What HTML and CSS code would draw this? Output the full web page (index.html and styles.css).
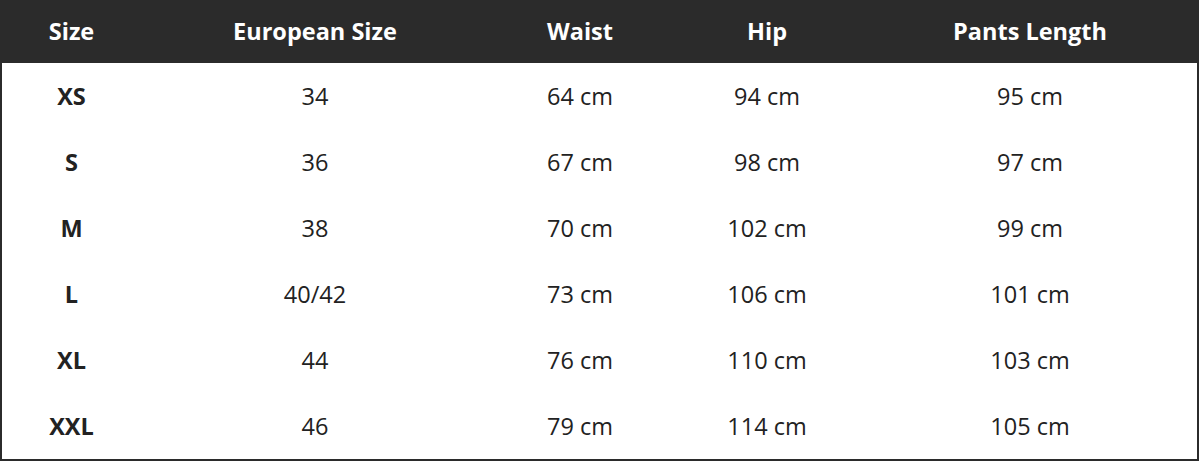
FILE: index.html
```html
<!DOCTYPE html>
<html lang="en">
<head>
<meta charset="utf-8">
<title>Size Chart</title>
<link rel="stylesheet" href="styles.css">
</head>
<body>
<table class="size-table">
  <colgroup>
    <col class="c1"><col class="c2"><col class="c3"><col class="c4"><col class="c5">
  </colgroup>
  <thead>
    <tr><th>Size</th><th>European Size</th><th>Waist</th><th>Hip</th><th>Pants Length</th></tr>
  </thead>
  <tbody>
    <tr><td class="sz">XS</td><td>34</td><td>64 cm</td><td>94 cm</td><td>95 cm</td></tr>
    <tr><td class="sz">S</td><td>36</td><td>67 cm</td><td>98 cm</td><td>97 cm</td></tr>
    <tr><td class="sz">M</td><td>38</td><td>70 cm</td><td>102 cm</td><td>99 cm</td></tr>
    <tr><td class="sz">L</td><td>40/42</td><td>73 cm</td><td>106 cm</td><td>101 cm</td></tr>
    <tr><td class="sz">XL</td><td>44</td><td>76 cm</td><td>110 cm</td><td>103 cm</td></tr>
    <tr><td class="sz">XXL</td><td>46</td><td>79 cm</td><td>114 cm</td><td>105 cm</td></tr>
  </tbody>
</table>
</body>
</html>
```
FILE: styles.css
```css
html, body {
  margin: 0;
  padding: 0;
  background: #ffffff;
}
.size-table {
  width: 1199px;
  border-collapse: collapse;
  table-layout: fixed;
  border: 2px solid #2b2b2b;
  font-family: "Open Sans", "Noto Sans", sans-serif;
  color: #222222;
}
.c1 { width: 140px; }
.c2 { width: 348px; }
.c3 { width: 182px; }
.c4 { width: 192px; }
.c5 { width: auto; }
.size-table th {
  background: #2b2b2b;
  color: #ffffff;
  font-weight: 700;
  font-size: 23.5px;
  height: 58px;
  padding: 0 0 3px;
  text-align: center;
  vertical-align: middle;
}
.size-table td {
  height: 66px;
  padding: 0;
  text-align: center;
  vertical-align: middle;
  font-size: 23.5px;
  font-weight: 400;
}
.size-table td.sz {
  font-weight: 700;
}
```
